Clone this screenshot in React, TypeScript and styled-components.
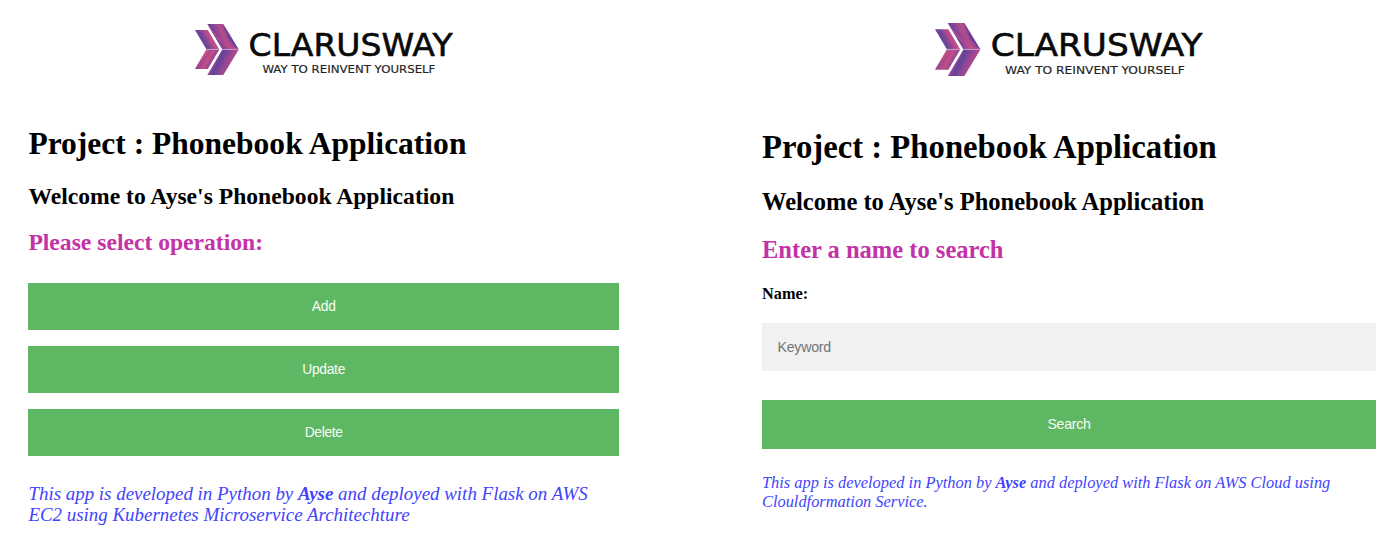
import React from "react";
import styled, { createGlobalStyle } from "styled-components";

const GlobalStyle = createGlobalStyle`
  body { margin: 0; background: #fff; color: #000; font-family: "Liberation Serif", serif; }
  * { box-sizing: border-box; }
`;

const Page = styled.main`
  display: grid;
  grid-template-columns: 590.6px 614px;
  column-gap: 143px;
  width: 1398px;
  height: 535px;
  padding-left: 28.4px;
  overflow: hidden;
`;

const Panel = styled.section<{ $top: number }>`
  display: flex;
  flex-direction: column;
  padding-top: ${(p) => p.$top}px;
`;

const LogoSvg = styled.svg<{ $indent: number }>`
  display: block;
  flex: none;
  margin-left: ${(p) => p.$indent}px;
  font-family: "DejaVu Sans", sans-serif;
`;

const Title = styled.h1<{ $size: number; $top: number }>`
  margin: ${(p) => p.$top}px 0 0;
  font-size: ${(p) => p.$size}px;
  line-height: 38px;
  white-space: nowrap;
`;

const Subtitle = styled.h2<{ $size: number; $top: number; $accent?: boolean }>`
  margin: ${(p) => p.$top}px 0 0;
  font-size: ${(p) => p.$size}px;
  line-height: 28px;
  color: ${(p) => (p.$accent ? "#c332a6" : "#000")};
  white-space: nowrap;
`;

const Actions = styled.div`
  display: flex;
  flex-direction: column;
  gap: 15.6px;
  margin-top: 27px;
`;

const Button = styled.button<{ $height: number; $size: number }>`
  width: 100%;
  height: ${(p) => p.$height}px;
  padding: 0 0 1px;
  border: 0;
  background: #5eb762;
  color: #f8fcf8;
  font: ${(p) => p.$size}px "Liberation Sans", sans-serif;
  letter-spacing: -0.3px;
`;

const SearchForm = styled.form`
  display: flex;
  flex-direction: column;
  margin-top: 20px;
`;

const Label = styled.label`
  font-size: 16.3px;
  font-weight: bold;
  line-height: 20px;
`;

const Keyword = styled.input`
  height: 47.6px;
  margin: 19.4px 0 29px;
  padding: 0 15.5px 1px;
  border: 0;
  border-radius: 0;
  background: #f1f1f1;
  font: 14.2px "Liberation Sans", sans-serif;
  letter-spacing: -0.25px;
  &::placeholder { color: #757575; }
`;

const Credit = styled.p<{ $size: number; $line: number; $top: number }>`
  margin: ${(p) => p.$top}px 0 0;
  color: #4343fb;
  font-size: ${(p) => p.$size}px;
  font-style: italic;
  line-height: ${(p) => p.$line}px;
  white-space: nowrap;
`;

function Logo({ width, indent, id }: { width: number; indent: number; id: string }) {
  const fill = (name: string) => `url(#${id}-${name})`;
  return (
    <LogoSvg $indent={indent} width={width} height={(width * 51) / 258} viewBox="0 0 258 51" aria-label="Clarusway">
      <defs>
        <linearGradient id={`${id}-upper`} gradientUnits="userSpaceOnUse" x1="15" y1="18" x2="38" y2="8">
          <stop offset="0" stopColor="#4a3f9e" />
          <stop offset="0.35" stopColor="#7d4597" />
          <stop offset="0.6" stopColor="#b84a8b" />
          <stop offset="0.85" stopColor="#8c4694" />
          <stop offset="1" stopColor="#4f409c" />
        </linearGradient>
        <linearGradient id={`${id}-lower`} gradientUnits="userSpaceOnUse" x1="18" y1="34" x2="38" y2="44">
          <stop offset="0" stopColor="#d04e84" />
          <stop offset="0.3" stopColor="#5f429c" />
          <stop offset="0.55" stopColor="#8d4695" />
          <stop offset="1" stopColor="#c34b89" />
        </linearGradient>
        <linearGradient id={`${id}-backUpper`} gradientUnits="userSpaceOnUse" x1="3" y1="18" x2="19" y2="9">
          <stop offset="0" stopColor="#4a3f9e" />
          <stop offset="0.4" stopColor="#7a4598" />
          <stop offset="0.7" stopColor="#c54c87" />
          <stop offset="1" stopColor="#8c4694" />
        </linearGradient>
        <linearGradient id={`${id}-backLower`} gradientUnits="userSpaceOnUse" x1="3" y1="33" x2="19" y2="42">
          <stop offset="0" stopColor="#5f429c" />
          <stop offset="0.3" stopColor="#a1488f" />
          <stop offset="0.55" stopColor="#c64c87" />
          <stop offset="0.85" stopColor="#7d4597" />
          <stop offset="1" stopColor="#54409b" />
        </linearGradient>
      </defs>
      <path d="M0 6H12.8L24.3 25.4H11.5Z" fill={fill("backUpper")} />
      <path d="M11.5 25.4H24.3L12.8 45H0Z" fill={fill("backLower")} />
      <path d="M12.3 0H28.3L43.8 25.4H27.3Z" fill={fill("upper")} />
      <path d="M27.3 25.4H43.8L28.3 51H12.3Z" fill={fill("lower")} />
      <path d="M12.3 0L28 18L43.5 25.4H35L20 13Z" fill="#c94c86" opacity="0.55" />
      <path d="M28 0L43.5 25.4L33 14Z" fill="#46409f" opacity="0.6" />
      <path d="M0 45L11.5 25.4H15Z" fill="#df527e" opacity="0.7" />
      <path d="M11.5 25.4H24.3M27.3 25.4H43.5" stroke="#c5a3cf" strokeWidth="0.9" />
      <text x="53.6" y="32" fontSize="31.4" textLength="204" lengthAdjust="spacingAndGlyphs" fill="#0a0a0a" stroke="#0a0a0a" strokeWidth="0.6">CLARUSWAY</text>
      <text x="67.4" y="48.9" fontSize="10.6" textLength="173" lengthAdjust="spacingAndGlyphs" fill="#222" stroke="#222" strokeWidth="0.15">WAY TO REINVENT YOURSELF</text>
    </LogoSvg>
  );
}

export default function App() {
  return (
    <>
      <GlobalStyle />
      <Page>
        <Panel $top={24}>
          <Logo width={258} indent={166.8} id="home" />
          <Title $size={31.53} $top={50}>Project : Phonebook Application</Title>
          <Subtitle $size={23.62} $top={19}>Welcome to Ayse's Phonebook Application</Subtitle>
          <Subtitle $size={23.62} $top={18} $accent>Please select operation:</Subtitle>
          <Actions>
            <Button $height={47.4} $size={13.8}>Add</Button>
            <Button $height={47.4} $size={13.8}>Update</Button>
            <Button $height={47.4} $size={13.8}>Delete</Button>
          </Actions>
          <Credit $size={18.93} $line={21} $top={27}>
            This app is developed in Python by <b>Ayse</b> and deployed with Flask on AWS
            <br />
            EC2 using Kubernetes Microservice Architechture
          </Credit>
        </Panel>
        <Panel $top={23}>
          <Logo width={268} indent={173} id="search" />
          <Title $size={32.73} $top={52}>Project : Phonebook Application</Title>
          <Subtitle $size={24.53} $top={22}>Welcome to Ayse's Phonebook Application</Subtitle>
          <Subtitle $size={24.53} $top={20} $accent>Enter a name to search</Subtitle>
          <SearchForm>
            <Label htmlFor="keyword">Name:</Label>
            <Keyword id="keyword" placeholder="Keyword" />
            <Button type="button" $height={49} $size={14.2}>Search</Button>
          </SearchForm>
          <Credit $size={16.4} $line={19} $top={24}>
            This app is developed in Python by <b>Ayse</b> and deployed with Flask on AWS Cloud using
            <br />
            Clouldformation Service.
          </Credit>
        </Panel>
      </Page>
    </>
  );
}
